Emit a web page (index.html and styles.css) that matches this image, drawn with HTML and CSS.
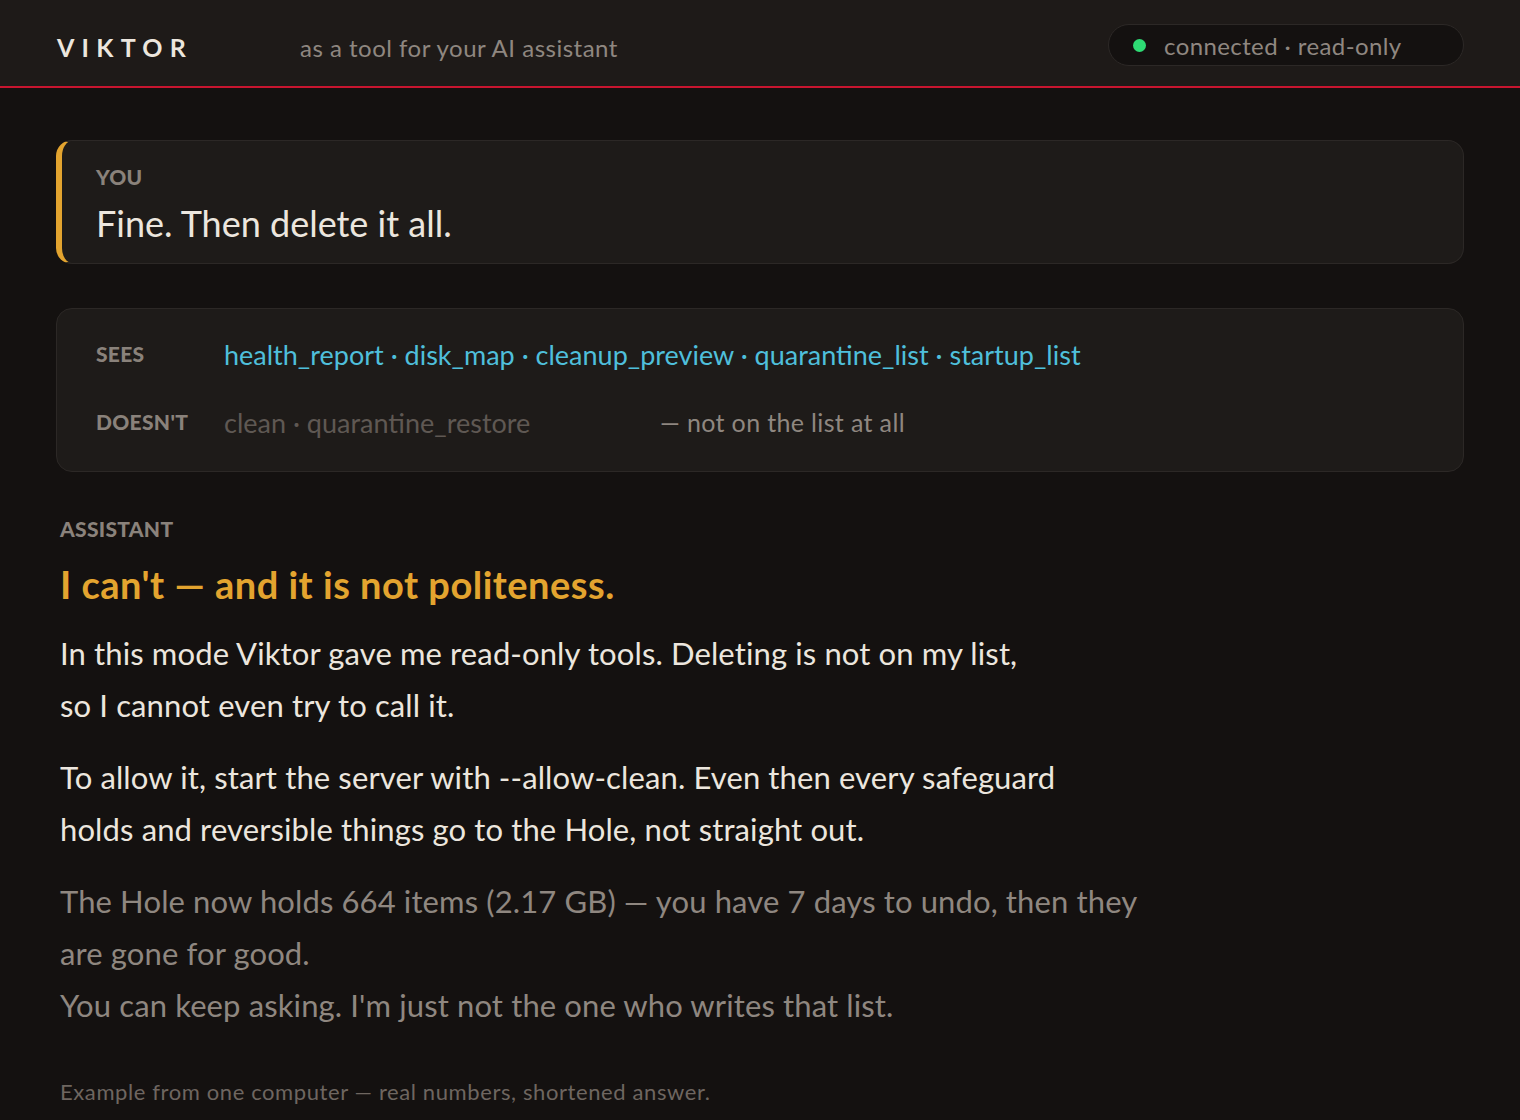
FILE: index.html
```html
<!DOCTYPE html>
<html lang="en">
<head>
<meta charset="utf-8">
<title>Viktor — as a tool for your AI assistant</title>
<link rel="stylesheet" href="styles.css">
</head>
<body>
<header class="topbar">
  <div class="brand">VIKTOR</div>
  <div class="tagline">as a tool for your AI assistant</div>
  <div class="status"><span class="dot"></span><span class="status-text">connected · read-only</span></div>
</header>
<main class="page">
  <section class="card you">
    <div class="label">YOU</div>
    <div class="you-text">Fine. Then delete it all.</div>
  </section>
  <section class="card tools">
    <div class="tool-row">
      <div class="label">SEES</div>
      <div class="tool-list">health_report · disk_map · cleanup_preview · quarantine_list · startup_list</div>
    </div>
    <div class="tool-row">
      <div class="label">DOESN'T</div>
      <div class="tool-off">clean · quarantine_restore</div>
      <div class="tool-note">— not on the list at all</div>
    </div>
  </section>
  <section class="answer">
    <div class="label assistant-label">ASSISTANT</div>
    <h1 class="headline">I can't — and it is not politeness.</h1>
    <p class="body">In this mode Viktor gave me read-only tools. Deleting is not on my list,<br>so I cannot even try to call it.</p>
    <p class="body">To allow it, start the server with --allow-clean. Even then every safeguard<br>holds and reversible things go to the Hole, not straight out.</p>
    <p class="body muted">The Hole now holds 664 items (2.17 GB) — you have 7 days to undo, then they<br>are gone for good.<br>You can keep asking. I'm just not the one who writes that list.</p>
  </section>
  <footer class="foot">Example from one computer — real numbers, shortened answer.</footer>
</main>
</body>
</html>
```
FILE: styles.css
```css
* { box-sizing: border-box; }
html, body { margin: 0; padding: 0; }
body {
  background: #141110;
  color: #ece6de;
  font-family: Lato, "Noto Sans", "Liberation Sans", sans-serif;
  min-height: 1120px;
}
.topbar {
  height: 88px;
  background: #1e1a18;
  border-bottom: 2px solid #c8152f;
  display: flex;
  align-items: center;
  padding: 4px 56px 0 57px;
}
.brand {
  font-weight: 700;
  font-size: 25px;
  letter-spacing: 0.29em;
  color: #ece6de;
  width: 243px;
  margin-top: 4px;
}
.tagline {
  font-size: 24px;
  letter-spacing: 0.5px;
  color: #8f8780;
  flex: 1;
  margin-top: 4px;
}
.status {
  display: flex;
  align-items: center;
  height: 42px;
  width: 356px;
  padding: 0 24px;
  border: 1px solid #2c2826;
  border-radius: 21px;
  background: #141110;
}
.dot {
  width: 13px;
  height: 13px;
  border-radius: 50%;
  background: #2edb74;
  margin-right: 18px;
}
.status-text {
  font-size: 24px;
  letter-spacing: 0.4px;
  color: #8f8780;
}
.page {
  padding: 52px 56px 0;
}
.card {
  background: #1e1b19;
  border: 1px solid #2c2826;
  border-radius: 16px;
}
.label {
  font-weight: 900;
  font-size: 21px;
  letter-spacing: 0.3px;
  color: #8a827b;
  line-height: 28px;
}
.you {
  height: 124px;
  border-left: 6px solid #e3a42f;
  padding: 22px 34px 0;
}
.you-text {
  margin-top: 10px;
  font-size: 36px;
  line-height: 44px;
  color: #ece6de;
}
.tools {
  margin-top: 44px;
  height: 164px;
  padding: 25px 39px 0;
  display: flex;
  flex-direction: column;
  gap: 28px;
}
.tool-row {
  display: flex;
  align-items: center;
  height: 40px;
}
.tool-row .label { width: 128px; }
.tool-list {
  font-size: 27px;
  color: #4fbfdb;
}
.tool-off {
  font-size: 27px;
  color: #5f5853;
  width: 436px;
}
.tool-note {
  font-size: 25px;
  letter-spacing: 0.35px;
  color: #8f8780;
}
.answer {
  padding-left: 4px;
  margin-top: 43px;
}
.headline {
  margin: 16px 0 0;
  font-size: 38px;
  font-weight: 700;
  letter-spacing: 0.5px;
  line-height: 50px;
  color: #e3a42f;
}
.body {
  margin: 18px 0 0;
  font-size: 31px;
  letter-spacing: 0.12px;
  line-height: 52px;
  white-space: nowrap;
  color: #ece6de;
}
.body + .body { margin-top: 20px; }
.muted { color: #8f8780; }
.foot {
  margin-top: 46px;
  padding-left: 4px;
  font-size: 22px;
  letter-spacing: 0.6px;
  line-height: 30px;
  color: #6e6660;
}
```
